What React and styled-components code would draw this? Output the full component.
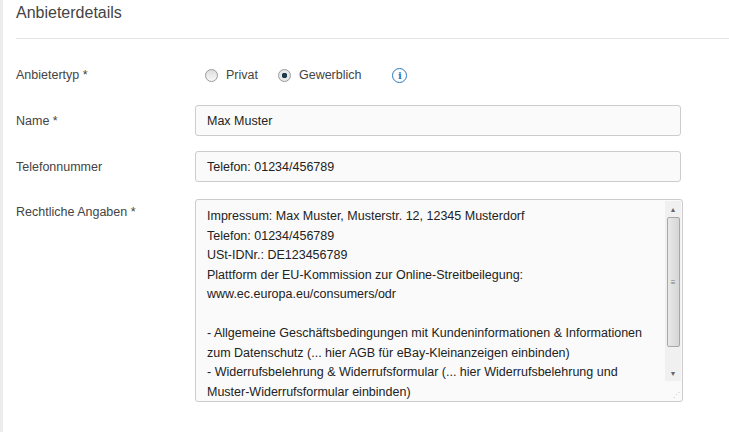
import React from 'react';
import styled, { createGlobalStyle } from 'styled-components';

const Global = createGlobalStyle`
  body { margin: 0; background: #fff; font-family: "Liberation Sans", Arial, sans-serif; color: #333; }
`;

const Page = styled.div`
  width: 729px;
  height: 432px;
  border-left: 3px solid #ececec;
  padding-left: 13px;
  box-sizing: border-box;
  overflow: hidden;
`;

const Title = styled.h2`
  margin: 0;
  padding-top: 4px;
  height: 34px;
  font-size: 16px;
  font-weight: normal;
  color: #444;
  border-bottom: 1px solid #e3e3e3;
`;

const Form = styled.div`
  padding-top: 26px;
  display: flex;
  flex-direction: column;
  gap: 15px;
`;

const Row = styled.div`
  display: flex;
  align-items: ${p => (p.$top ? 'flex-start' : 'center')};
  min-height: ${p => p.$h || 31}px;
  margin-bottom: ${p => p.$mb || 0}px;
`;

const Label = styled.div`
  width: 179px;
  font-size: 12.5px;
  color: #444;
  padding-top: ${p => (p.$top ? '8px' : '0')};
`;

const Radios = styled.div`
  display: flex;
  align-items: center;
  font-size: 12.5px;
  padding-left: 10px;
`;

const Radio = styled.span`
  display: inline-block;
  width: 11px;
  height: 11px;
  border-radius: 50%;
  border: 1px solid #9a9a9a;
  background: ${p => (p.$on ? 'radial-gradient(circle, #1d3a4a 0 2.5px, #e8e8e8 3px)' : 'linear-gradient(#ddd, #f8f8f8)')};
  margin-right: 8px;
`;

const Opt = styled.label`
  display: flex;
  align-items: center;
  margin-right: 20px;
  color: #444;
`;

const Info = styled.span`
  display: inline-flex;
  align-items: center;
  justify-content: center;
  width: 13px;
  height: 13px;
  border: 1.5px solid #2a7ac0;
  border-radius: 50%;
  color: #2a7ac0;
  font-size: 10px;
  font-weight: bold;
  font-family: "DejaVu Serif", serif;
  margin-left: 11px;
`;

const Input = styled.div`
  width: 486px;
  height: 31px;
  box-sizing: border-box;
  border: 1px solid #ccc;
  border-radius: 3px;
  background: #fafafa;
  font-size: 12.5px;
  padding: 0 11px;
  display: flex;
  align-items: center;
  color: #222;
`;

const Area = styled.div`
  width: 488px;
  height: 203px;
  box-sizing: border-box;
  border: 1px solid #ccc;
  border-radius: 3px;
  background: #fafafa;
  display: flex;
  position: relative;
  margin-top: 2px;
`;

const AreaText = styled.div`
  flex: 1;
  padding: 7px 11px;
  font-size: 12.5px;
  line-height: 19.5px;
  color: #222;
  white-space: pre-wrap;
  overflow: hidden;
`;

const Scroll = styled.div`
  width: 16px;
  margin: 1px 1px 20px 0;
  display: flex;
  flex-direction: column;
  align-items: center;
  background: #f0f0f0;
`;

const Arrow = styled.div`
  height: 16px;
  font-size: 7px;
  color: #666;
  display: flex;
  align-items: center;
`;

const Thumb = styled.div`
  width: 13px;
  height: 130px;
  border: 1px solid #a8a8a8;
  border-radius: 2px;
  background: linear-gradient(90deg, #e8e8e8, #d6d6d6);
  box-sizing: border-box;
  display: flex;
  align-items: center;
  justify-content: center;
  font-size: 8px;
  color: #777;
`;

const Grip = styled.div`
  position: absolute;
  right: 2px;
  bottom: 2px;
  font-size: 7px;
  color: #bbb;
`;

const text = `Impressum: Max Muster, Musterstr. 12, 12345 Musterdorf
Telefon: 01234/456789
USt-IDNr.: DE123456789
Plattform der EU-Kommission zur Online-Streitbeilegung:
www.ec.europa.eu/consumers/odr

- Allgemeine Geschäftsbedingungen mit Kundeninformationen & Informationen zum Datenschutz (... hier AGB für eBay-Kleinanzeigen einbinden)
- Widerrufsbelehrung & Widerrufsformular (... hier Widerrufsbelehrung und Muster-Widerrufsformular einbinden)`;

export default function App() {
  return (
    <Page>
      <Global />
      <Title>Anbieterdetails</Title>
      <Form>
        <Row $h={20} $mb={5}>
          <Label>Anbietertyp *</Label>
          <Radios>
            <Opt><Radio />Privat</Opt>
            <Opt><Radio $on />Gewerblich</Opt>
            <Info>i</Info>
          </Radios>
        </Row>
        <Row>
          <Label>Name *</Label>
          <Input>Max Muster</Input>
        </Row>
        <Row>
          <Label>Telefonnummer</Label>
          <Input>Telefon: 01234/456789</Input>
        </Row>
        <Row $top>
          <Label $top>Rechtliche Angaben *</Label>
          <Area>
            <AreaText>{text}</AreaText>
            <Scroll>
              <Arrow>▲</Arrow>
              <Thumb>≡</Thumb>
              <div style={{ flex: 1 }} />
              <Arrow>▼</Arrow>
            </Scroll>
            <Grip>⋰</Grip>
          </Area>
        </Row>
      </Form>
    </Page>
  );
}
